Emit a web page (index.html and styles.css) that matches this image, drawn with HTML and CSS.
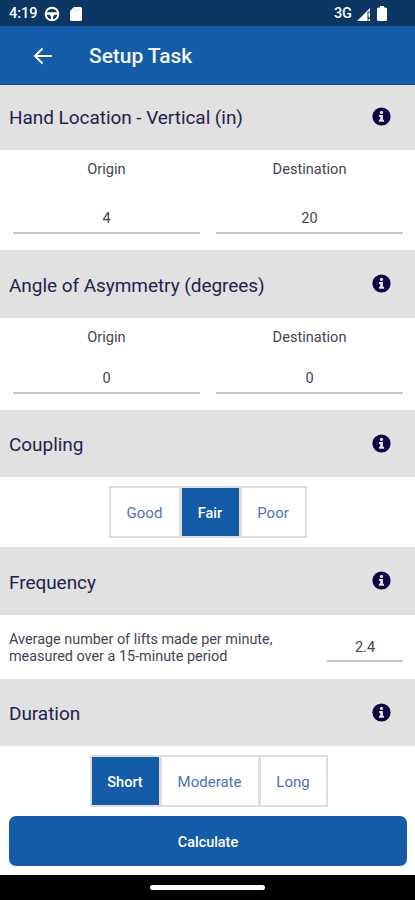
FILE: index.html
```html
<!DOCTYPE html>
<html lang="en">
<head>
    <meta charset="UTF-8">
    <meta name="viewport" content="width=device-width, initial-scale=1.0">
    <title>Setup Task</title>
    <link rel="stylesheet" href="styles.css">
</head>
<body>
    <svg width="0" height="0" class="icon-defs">
        <symbol id="info" viewBox="0 0 20 20">
            <circle cx="10" cy="10" r="9.6" fill="#0d0544"/>
            <circle cx="10" cy="5.7" r="1.7" fill="#e4e4e4"/>
            <path d="M7.5 8.4h4v5h1.2v2H7.3v-2h1.3v-3H7.5z" fill="#e4e4e4"/>
        </symbol>
    </svg>

    <div class="status-bar">
        <span class="time">4:19</span>
        <svg class="wheel" width="16" height="16" viewBox="0 0 16 16">
            <circle cx="8" cy="8" r="6.3" fill="none" stroke="#fff" stroke-width="2"/>
            <path d="M2 6.2h12v2.6h-3.5L9 11v3H7v-3L5.500 8.800H2z" fill="#fff"/>
        </svg>
        <svg class="card" width="12" height="14" viewBox="0 0 12 14">
            <path d="M4 0h6.500Q12 0 12 1.500v11Q12 14 10.500 14h-9Q0 14 0 12.500V4z" fill="#fff"/>
            <path d="M4.500 2v2M6.800 2v2M9 2v2" stroke="#b9c6d6" stroke-width="0.800"/>
        </svg>
        <span class="network">3G</span>
        <svg class="signal" width="14" height="14" viewBox="0 0 14 14">
            <path d="M0 14L13 1v3.500h-2.500V14z" fill="#fff"/>
            <path d="M12.200 5.500v5M12.200 12v2" stroke="#fff" stroke-width="1.500"/>
        </svg>
        <svg class="battery" width="10" height="15" viewBox="0 0 10 15">
            <path d="M3 0h4v1.500h1.500q1.500 0 1.500 1.500v10.500q0 1.500-1.500 1.500h-7Q0 15 0 13.500V3q0-1.500 1.500-1.500H3z" fill="#fff"/>
        </svg>
    </div>

    <div class="app-bar">
        <svg class="back" width="20" height="18" viewBox="0 0 20 18">
            <path d="M19 9H2M9.500 1.500L2 9l7.500 7.500" fill="none" stroke="#fff" stroke-width="2"/>
        </svg>
        <h1>Setup Task</h1>
    </div>

    <div class="section-header first">
        <h2>Hand Location - Vertical (in)</h2>
        <svg class="info"><use href="#info"/></svg>
    </div>
    <div class="fields tall">
        <div class="field">
            <label for="hand-origin">Origin</label>
            <input type="text" id="hand-origin" value="4">
        </div>
        <div class="field">
            <label for="hand-dest">Destination</label>
            <input type="text" id="hand-dest" value="20">
        </div>
    </div>

    <div class="section-header">
        <h2>Angle of Asymmetry (degrees)</h2>
        <svg class="info"><use href="#info"/></svg>
    </div>
    <div class="fields">
        <div class="field">
            <label for="angle-origin">Origin</label>
            <input type="text" id="angle-origin" value="0">
        </div>
        <div class="field">
            <label for="angle-dest">Destination</label>
            <input type="text" id="angle-dest" value="0">
        </div>
    </div>

    <div class="section-header short">
        <h2>Coupling</h2>
        <svg class="info"><use href="#info"/></svg>
    </div>
    <div class="options coupling">
        <button>Good</button>
        <button class="active">Fair</button>
        <button>Poor</button>
    </div>

    <div class="section-header">
        <h2>Frequency</h2>
        <svg class="info"><use href="#info"/></svg>
    </div>
    <div class="frequency">
        <label for="frequency">Average number of lifts made per minute,<br>measured over a 15-minute period</label>
        <input type="text" id="frequency" value="2.4">
    </div>

    <div class="section-header short">
        <h2>Duration</h2>
        <svg class="info"><use href="#info"/></svg>
    </div>
    <div class="options duration">
        <button class="active">Short</button>
        <button>Moderate</button>
        <button>Long</button>
    </div>

    <button class="calculate">Calculate</button>

    <div class="nav-bar"><span></span></div>
</body>
</html>
```
FILE: styles.css
```css
* {
    box-sizing: border-box;
}
body {
    margin: 0;
    height: 900px;
    display: flex;
    flex-direction: column;
    overflow: hidden;
    font-family: Roboto, sans-serif;
    background-color: #fff;
    color: #454354;
}
button, input {
    font-family: inherit;
}
.icon-defs {
    display: none;
}
.status-bar {
    display: flex;
    align-items: center;
    height: 26px;
    padding: 1px 28px 0 9px;
    background-color: #0b3762;
    color: #fff;
    font-size: 14.5px;
    font-weight: 500;
}
.time {
    width: 35px;
}
.card {
    margin-left: 10px;
}
.network {
    margin-left: auto;
    font-size: 14.5px;
}
.signal {
    margin-left: 5px;
}
.battery {
    margin-left: 6px;
}
.app-bar {
    display: flex;
    align-items: center;
    height: 59px;
    padding: 2px 33px 0;
    background-color: #145ca8;
    border-bottom: 1px solid #0d4b94;
}
h1 {
    margin: 0 0 0 36px;
    color: #f2f6fb;
    font-size: 21px;
    font-weight: 500;
    letter-spacing: -0.05px;
}
.section-header {
    display: flex;
    align-items: center;
    justify-content: space-between;
    height: 68px;
    padding: 2px 24px 0 9px;
    background-color: #e1e1e1;
}
.section-header.first {
    height: 65px;
    padding-top: 0;
}
.section-header.short {
    height: 67px;
}
h2 {
    margin: 0;
    color: #241e4c;
    font-size: 19px;
    font-weight: 400;
    letter-spacing: -0.05px;
}
.info {
    width: 19px;
    height: 19px;
    margin-top: -3px;
}
.fields {
    display: flex;
    justify-content: space-between;
    height: 92px;
    padding: 10px 12px 16px 13px;
}
.fields.tall {
    height: 100px;
}
.field {
    display: flex;
    flex-direction: column;
    justify-content: space-between;
    width: 187px;
    text-align: center;
}
.fields label {
    font-size: 14.6px;
    line-height: 18px;
}
input {
    width: 100%;
    height: 30px;
    padding: 0;
    border: none;
    border-bottom: 2px solid #c6c6c6;
    background: none;
    color: #454354;
    font-size: 14.5px;
    text-align: center;
}
.options {
    display: flex;
    justify-content: center;
    height: 70px;
    padding: 9px 0;
}
.options button {
    border: 2px solid #dedede;
    background-color: #fff;
    color: #4f72b4;
    font-size: 15px;
    padding: 2px 0 0;
}
.options button + button {
    margin-left: -1px;
}
.options .active {
    background-color: #145ca8;
    color: #fff;
    font-size: 14.5px;
    font-weight: 500;
}
.coupling button {
    width: 67px;
}
.coupling button:first-child {
    width: 72px;
}
.coupling .active {
    width: 61px;
}
.duration button {
    width: 69px;
}
.duration button:first-child {
    width: 71px;
}
.duration button:nth-child(2) {
    width: 100px;
}
.duration {
    padding-left: 2px;
}
.frequency {
    display: flex;
    justify-content: space-between;
    height: 64px;
    padding: 16px 12px 0 9px;
    font-size: 14.4px;
    line-height: 17px;
}
.frequency input {
    width: 76px;
    height: 31px;
    padding-top: 3px;
}
.calculate {
    height: 50px;
    margin: 0 8px 0 9px;
    padding: 2px 0 0;
    border: none;
    border-radius: 7px;
    background-color: #145ca8;
    color: #fff;
    font-size: 14.4px;
    font-weight: 500;
}
.nav-bar {
    display: flex;
    justify-content: center;
    margin-top: auto;
    height: 25px;
    padding-top: 10px;
    background-color: #000;
}
.nav-bar span {
    width: 115px;
    height: 5px;
    border-radius: 3px;
    background-color: #fff;
}
```
